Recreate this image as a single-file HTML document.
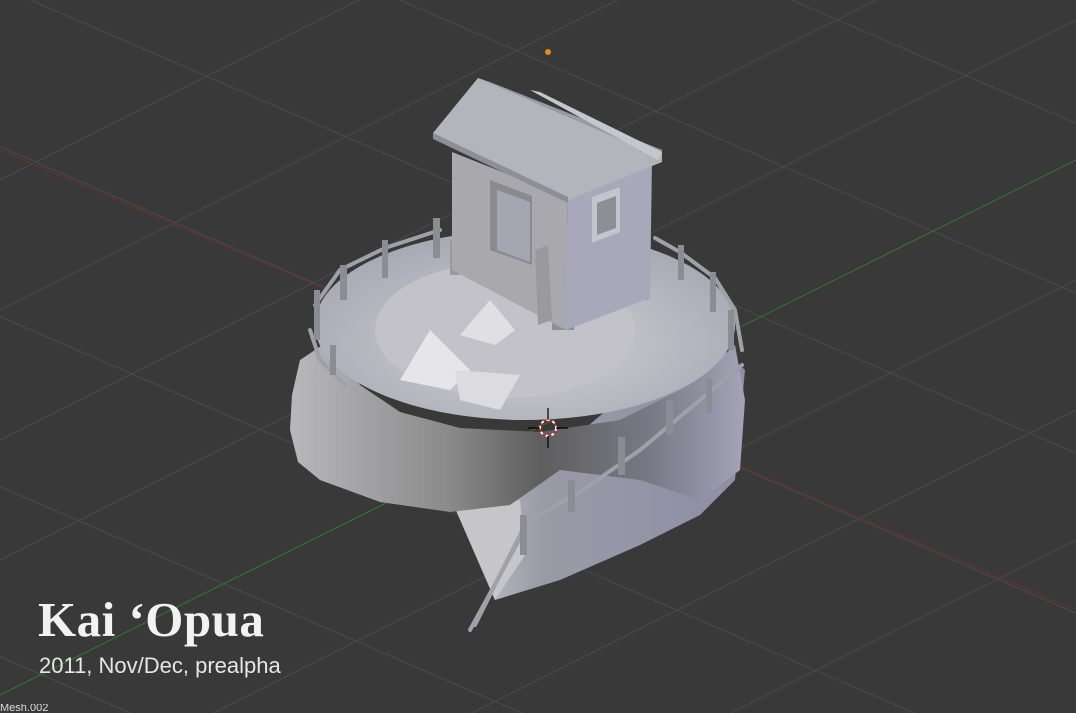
<!DOCTYPE html>
<html><head><meta charset="utf-8"><style>
html,body{margin:0;padding:0;background:#393939;width:1076px;height:713px;overflow:hidden;position:relative}
svg{position:absolute;left:0;top:0}
.t1{position:absolute;left:38px;top:591px;font-family:"Liberation Serif",serif;font-weight:bold;font-size:49px;line-height:58px;color:#f2f2f2;letter-spacing:0.5px}
.t2{position:absolute;left:39px;top:652px;font-family:"Liberation Sans",sans-serif;font-size:22px;line-height:28px;color:#e6e6e6}
.t3{position:absolute;left:0;top:704px;width:60px;height:9px;overflow:hidden;font-family:"Liberation Sans",sans-serif;font-size:11px;line-height:9px;color:#ddd}
</style></head><body>
<svg width="1076" height="713" viewBox="0 0 1076 713">
<defs>
<linearGradient id="side" x1="0" x2="1" y1="0" y2="0">
<stop offset="0" stop-color="#b8b8bc"/><stop offset="0.35" stop-color="#8a8a8a"/><stop offset="0.55" stop-color="#5e5e5e"/><stop offset="0.8" stop-color="#7a7a88"/><stop offset="1" stop-color="#a4a4b8"/></linearGradient>
<linearGradient id="ramp" x1="0" x2="1" y1="0" y2="0">
<stop offset="0" stop-color="#c8c8cc"/><stop offset="0.3" stop-color="#9a9aa6"/><stop offset="1" stop-color="#8e8ea6"/></linearGradient>
<radialGradient id="top" cx="0.5" cy="0.6" r="0.6"><stop offset="0" stop-color="#d0d0d4"/><stop offset="1" stop-color="#a8a8b4"/></radialGradient>
</defs>
<g stroke="#4a4a4a" stroke-width="1" fill="none">
<line x1="-200" y1="-100" x2="1276" y2="540"/>
<line x1="-200" y1="60" x2="1276" y2="700"/>
<line x1="-200" y1="230" x2="1276" y2="870"/>
<line x1="-200" y1="400" x2="1276" y2="1040"/>
<line x1="-200" y1="-260" x2="1276" y2="380"/>
<line x1="-200" y1="-430" x2="1276" y2="210"/>
<line x1="-200" y1="570" x2="1276" y2="1210"/>
<line x1="0" y1="440" x2="1076" y2="-100"/>
<line x1="0" y1="560" x2="1076" y2="20"/>
<line x1="0" y1="820" x2="1076" y2="280"/>
<line x1="0" y1="950" x2="1076" y2="410"/>
<line x1="0" y1="1080" x2="1076" y2="540"/>
<line x1="0" y1="310" x2="1076" y2="-230"/>
<line x1="0" y1="180" x2="1076" y2="-360"/>
</g>
<line x1="0" y1="150" x2="1076" y2="610" stroke="#6a3030" stroke-width="1"/>
<line x1="0" y1="695" x2="1076" y2="160" stroke="#2f7a2f" stroke-width="1"/>
<circle cx="548" cy="52" r="3" fill="#e08a20"/>
<polygon points="455,508 495,600 560,580 640,545 700,515 735,480 745,370 700,330 560,450" fill="url(#ramp)"/>
<polygon points="455,508 495,600 525,555 520,500" fill="#c6c6ca"/>
<path d="M292,395 L300,360 330,340 360,385 400,412 460,428 540,432 620,420 690,385 735,345 745,400 740,470 700,500 640,480 560,470 510,505 450,512 380,502 320,480 298,462 290,430 Z" fill="url(#side)"/>
<ellipse cx="525" cy="325" rx="210" ry="95" fill="url(#top)"/>
<ellipse cx="505" cy="330" rx="130" ry="68" fill="#c2c2c8"/>
<polygon points="400,380 430,330 470,370 450,390" fill="#e6e6ea"/>
<polygon points="460,335 490,300 515,330 495,345" fill="#e0e0e4"/>
<polygon points="455,370 520,375 500,410 460,400" fill="#dcdce0"/>
<rect x="450" y="240" width="10" height="35" fill="#9a9a9e"/>
<rect x="552" y="290" width="22" height="40" fill="#8e8e96"/>
<rect x="630" y="250" width="18" height="50" fill="#9696a4"/>
<polygon points="452,152 568,198 566,330 452,270" fill="#a9a9ad"/>
<polygon points="490,180 532,196 532,265 490,250" fill="#8a8a90"/>
<polygon points="497,190 530,202 530,262 497,250" fill="#a6a6b2"/>
<polygon points="535,250 548,245 552,320 538,325" fill="#9a9a9e"/>
<polygon points="568,198 652,160 650,298 566,330" fill="#a8a8ba"/>
<polygon points="592,197 620,187 620,232 592,243" fill="#c4c4cc"/>
<polygon points="597,203 616,196 616,228 597,235" fill="#8e8e96"/>
<polygon points="433,133 478,78 662,150 662,162 568,200" fill="#b4b4bc"/>
<polygon points="433,133 568,197 568,203 433,139" fill="#8e8e98"/>
<polygon points="478,78 490,82 662,150 660,157" fill="#9a9aa4"/>
<polygon points="530,90 540,92 662,152 658,160" fill="#c6c6ce"/>
<g stroke="#a0a0a8" stroke-width="4" fill="none" stroke-linecap="round">
<polyline points="315,305 340,270 385,248 440,230"/>
<polyline points="310,330 320,360 345,385"/>
<polyline points="655,238 680,252 715,278 735,310 742,350"/>
<polyline points="470,630 530,520 580,492 640,450 700,400 742,365"/>
<polyline points="475,625 525,525"/>
</g>
<g fill="#8c8c94">
<rect x="314" y="290" width="6" height="50"/><rect x="340" y="265" width="7" height="35"/><rect x="382" y="240" width="6" height="38"/><rect x="433" y="218" width="7" height="40"/>
<rect x="330" y="345" width="6" height="30"/><rect x="678" y="245" width="6" height="35"/><rect x="710" y="272" width="6" height="40"/><rect x="728" y="310" width="6" height="40"/>
<rect x="520" y="515" width="7" height="40"/><rect x="568" y="480" width="7" height="32"/><rect x="618" y="437" width="7" height="38"/><rect x="666" y="400" width="7" height="35"/><rect x="706" y="378" width="6" height="35"/>
</g>
<circle cx="548" cy="428" r="8" fill="none" stroke="#fff" stroke-width="2" stroke-dasharray="3 3"/>
<circle cx="548" cy="428" r="8" fill="none" stroke="#d02020" stroke-width="2" stroke-dasharray="3 3" stroke-dashoffset="3"/>
<g stroke="#000" stroke-width="1.2"><line x1="528" y1="428" x2="540" y2="428"/><line x1="556" y1="428" x2="568" y2="428"/><line x1="548" y1="408" x2="548" y2="420"/><line x1="548" y1="436" x2="548" y2="448"/></g>
</svg>
<div class="t1">Kai ‘Opua</div>
<div class="t2">2011, Nov/Dec, prealpha</div>
<div class="t3">Mesh.002</div>
</body></html>
